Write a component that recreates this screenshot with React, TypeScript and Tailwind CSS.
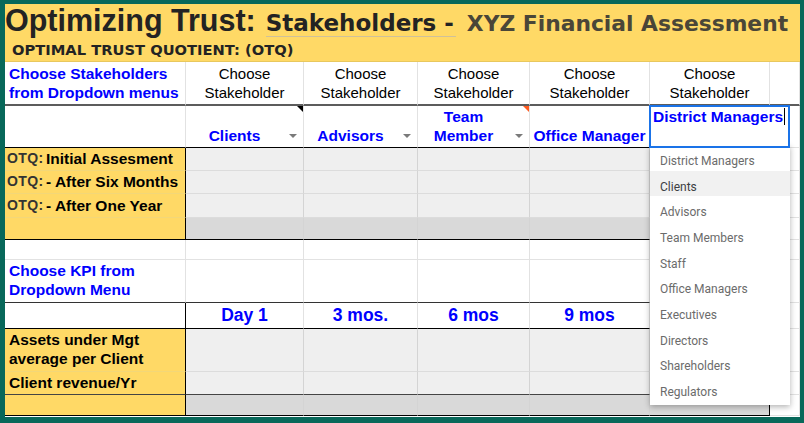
import clsx from "clsx"
import type { ReactNode } from "react"

const COLS = ["w-[181px]", "w-[118px]", "w-[114px]", "w-[112px]", "w-[120px]", "w-[120px]", "flex-1"]
const GRID = "border-r border-r-[#e2e2e2]"
const GRID_B = "border-b border-b-[#e2e2e2]"
const YELLOW = "bg-[#ffd966]"
const GRAY = "bg-[#efefef]"
const DARK = "bg-[#d9d9d9]"
const BLUE = "font-bold text-[#0000ff] text-[15.5px]"

function Cell({
  col,
  r = GRID,
  b = GRID_B,
  className,
  children,
}: {
  col: number
  r?: string
  b?: string
  className?: string
  children?: ReactNode
}) {
  return <div className={clsx("relative flex shrink-0 leading-[19px]", COLS[col], r, b, className)}>{children}</div>
}

function Arrow({ right = "right-[6px]" }: { right?: string }) {
  return (
    <span
      className={clsx(
        "absolute bottom-[9px] h-0 w-0 border-l-[4px] border-r-[4px] border-t-[4px] border-l-transparent border-r-transparent border-t-[#7a7a7a]",
        right
      )}
    />
  )
}

function Corner({ color }: { color: string }) {
  return <span className={clsx("absolute right-0 top-0 h-0 w-0 border-l-[6px] border-l-transparent border-t-[6px]", color)} />
}

// gray data cells B..F, G stays white
function DataCells({ bg, b, lastB }: { bg: string; b: string; lastB?: string }) {
  return (
    <>
      {[1, 2, 3, 4].map((c) => (
        <Cell key={c} col={c} r="border-r border-r-[#d4d4d4]" b={b} className={bg} />
      ))}
      <Cell col={5} r={lastB ?? "border-r border-r-[#d4d4d4]"} b={b} className={bg} />
      <Cell col={6} />
    </>
  )
}

const menu = [
  "District Managers",
  "Clients",
  "Advisors",
  "Team Members",
  "Staff",
  "Office Managers",
  "Executives",
  "Directors",
  "Shareholders",
  "Regulators",
]

export default function App() {
  return (
    <div className="h-[423px] w-[804px] overflow-hidden bg-[#08685a] pb-[6px] pl-[5px] pr-[4px] pt-[4px] font-['Liberation_Sans',Arial,sans-serif] text-[15px] text-black">
      <div className="relative h-[413px] bg-white">
        {/* Title block */}
        <div className={clsx(YELLOW, "h-[58px] border-b border-b-[#e8c85e]")}>
          <div className="flex h-[34px] items-baseline pt-[1px]">
            <span className="text-[30.5px] font-bold leading-none text-[#232323]">Optimizing Trust:</span>
            <span className="ml-[10px] border-b border-b-[#cfc19a] pb-[1px] pr-[2px] font-['DejaVu_Sans',Verdana,sans-serif] text-[23px] font-bold leading-none text-[#232323]">
              Stakeholders -
            </span>
            <span className="ml-[11px] font-['DejaVu_Sans',Verdana,sans-serif] text-[21.8px] font-bold leading-none text-[#4a4638]">
              XYZ Financial Assessment
            </span>
          </div>
          <div className="h-[23px] pl-[7px] font-['DejaVu_Sans',Verdana,sans-serif] text-[14.7px] font-bold leading-[24px] text-[#232323]">
            OPTIMAL TRUST QUOTIENT: (OTQ)
          </div>
        </div>

        {/* Stakeholder pickers */}
        <div className="flex h-[44px]">
          <Cell col={0} b="border-b-2 border-b-[#5c5c5c]" className="items-end pb-[2px] pl-[4px]">
            <span className={BLUE}>
              Choose Stakeholders
              <br />
              from Dropdown menus
            </span>
          </Cell>
          {[1, 2, 3, 4, 5].map((c) => (
            <Cell key={c} col={c} b="border-b-2 border-b-[#5c5c5c]" className="items-end justify-center pb-[2px] text-center">
              <span>
                Choose
                <br />
                Stakeholder
              </span>
            </Cell>
          ))}
          <Cell col={6} b="border-b-2 border-b-[#5c5c5c]" />
        </div>

        <div className="flex h-[42px]">
          <Cell col={0} b="border-b border-b-black" />
          <Cell col={1} b="border-b border-b-black" className="items-end justify-center pb-[2px] pr-[20px]">
            <span className={BLUE}>Clients</span>
            <Arrow />
            <Corner color="border-t-black" />
          </Cell>
          <Cell col={2} b="border-b border-b-black" className="items-end justify-center pb-[2px] pr-[20px]">
            <span className={BLUE}>Advisors</span>
            <Arrow />
          </Cell>
          <Cell col={3} b="border-b border-b-black" className="items-end justify-center pb-[2px] pr-[20px] text-center">
            <span className={BLUE}>
              Team
              <br />
              Member
            </span>
            <Arrow />
            <Corner color="border-t-[#ff5a1f]" />
          </Cell>
          <Cell col={4} b="border-b border-b-black" className="items-end justify-center pb-[2px] whitespace-nowrap">
            <span className={BLUE}>Office Manager</span>
          </Cell>
          <Cell col={5} b="border-b border-b-black" />
          <Cell col={6} />
        </div>

        {/* OTQ rows */}
        {[
          { h: "h-[23px]", pre: "OTQ:", label: "Initial Assesment" },
          { h: "h-[23px]", pre: "OTQ:", label: "- After Six Months" },
          { h: "h-[24px]", pre: "OTQ:", label: "- After One Year" },
        ].map((row) => (
          <div key={row.label} className={clsx("flex", row.h)}>
            <Cell col={0} r="border-r border-r-black" b="border-b border-b-[#f3d778]" className={clsx(YELLOW, "items-end pb-[2px] pl-[2px] font-bold")}>
              <span className="w-[39px] text-[14px] tracking-[0.4px] text-[#333]">{row.pre}</span>
              <span className="text-[15.5px]">{row.label}</span>
            </Cell>
            <DataCells bg={GRAY} b="border-b border-b-[#dcdcdc]" />
          </div>
        ))}
        <div className="flex h-[22px]">
          <Cell col={0} r="border-r border-r-black" b="border-b border-b-black" className={YELLOW} />
          <DataCells bg={DARK} b="border-b border-b-black" />
        </div>

        <div className="flex h-[20px]">
          {COLS.map((_, c) => (
            <Cell key={c} col={c} />
          ))}
        </div>

        {/* KPI section */}
        <div className="flex h-[43px]">
          <Cell col={0} b="border-b border-b-[#333]" className="items-end pb-[3px] pl-[4px]">
            <span className={BLUE}>
              Choose KPI from
              <br />
              Dropdown Menu
            </span>
          </Cell>
          {[1, 2, 3, 4, 5].map((c) => (
            <Cell key={c} col={c} b="border-b border-b-[#333]" />
          ))}
          <Cell col={6} />
        </div>

        <div className="flex h-[26px]">
          <Cell col={0} r="border-r border-r-black" b="border-b border-b-black" />
          {["Day 1", "3 mos.", "6 mos", "9 mos", ""].map((t, i) => (
            <Cell key={i} col={i + 1} b="border-b border-b-black" className="items-end justify-center pb-[3px]">
              <span className="text-[17.5px] font-bold text-[#0000ff]">{t}</span>
            </Cell>
          ))}
          <Cell col={6} />
        </div>

        <div className="flex h-[43px]">
          <Cell col={0} r="border-r border-r-black" b="border-b border-b-[#f3d778]" className={clsx(YELLOW, "items-end pb-[3px] pl-[4px] text-[15.5px] font-bold")}>
            <span>
              Assets under Mgt
              <br />
              average per Client
            </span>
          </Cell>
          <DataCells bg={GRAY} b="border-b border-b-[#dcdcdc]" />
        </div>
        <div className="flex h-[23px]">
          <Cell col={0} r="border-r border-r-black" b="border-b border-b-[#444]" className={clsx(YELLOW, "items-end pb-[2px] pl-[4px] text-[15.5px] font-bold")}>
            <span>Client revenue/Yr</span>
          </Cell>
          <DataCells bg={GRAY} b="border-b border-b-[#444]" />
        </div>
        <div className="flex h-[21px]">
          <Cell col={0} r="border-r border-r-black" b="border-b border-b-black" className={YELLOW} />
          <DataCells bg={DARK} b="border-b border-b-black" lastB="border-r border-r-black" />
        </div>

        {/* active cell editor */}
        <div className="absolute left-[644px] top-[101px] z-20 h-[43px] w-[141px] border-2 border-[#1a73e8] bg-white pl-[2px] pt-[1px] text-[15.5px] leading-[17px]">
          <span className="font-bold text-[#0000ff]">District Managers</span>
          <span className="ml-px inline-block h-[17px] w-px align-top bg-black" />
        </div>

        {/* validation dropdown */}
        <div className="absolute left-[645px] top-[141px] z-10 w-[140px] bg-white pb-[3px] font-['Roboto',Arial,sans-serif] text-[12px] text-[#6b6b6b] shadow-[0_2px_6px_rgba(0,0,0,0.3)]">
          {menu.map((m) => (
            <div key={m} className={clsx("h-[25.67px] pl-[10px] pt-[7px] leading-[18px]", m === "Clients" && "bg-[#f1f1f1] text-[#3c4043]")}>
              {m}
            </div>
          ))}
        </div>
      </div>
    </div>
  )
}
